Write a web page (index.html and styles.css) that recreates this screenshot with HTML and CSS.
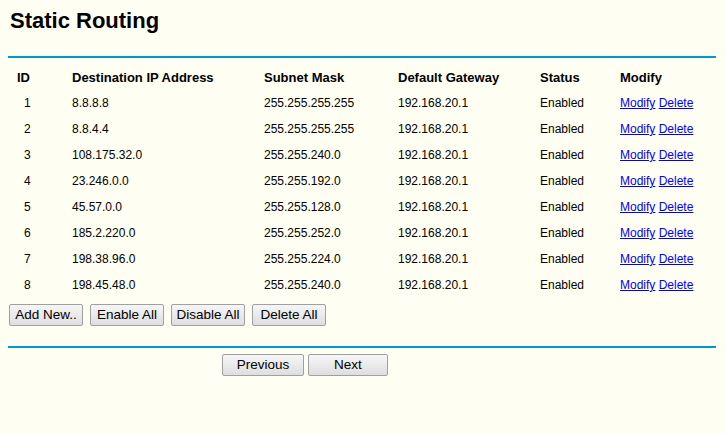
FILE: index.html
```html
<!DOCTYPE html>
<html>
<head>
<meta charset="utf-8">
<link rel="stylesheet" href="styles.css">
</head>
<body>
<div class="page">
  <h1 class="title">Static Routing</h1>
  <div class="rule"></div>
  <table class="routes">
    <colgroup>
      <col class="c-id"><col class="c-dst"><col class="c-mask"><col class="c-gw"><col class="c-st"><col class="c-mod">
    </colgroup>
    <thead>
      <tr>
        <th class="id-h">ID</th>
        <th>Destination IP Address</th>
        <th>Subnet Mask</th>
        <th>Default Gateway</th>
        <th>Status</th>
        <th>Modify</th>
      </tr>
    </thead>
    <tbody>
      <tr><td class="id">1</td><td>8.8.8.8</td><td>255.255.255.255</td><td>192.168.20.1</td><td>Enabled</td><td><a href="#">Modify</a> <a href="#">Delete</a></td></tr>
      <tr><td class="id">2</td><td>8.8.4.4</td><td>255.255.255.255</td><td>192.168.20.1</td><td>Enabled</td><td><a href="#">Modify</a> <a href="#">Delete</a></td></tr>
      <tr><td class="id">3</td><td>108.175.32.0</td><td>255.255.240.0</td><td>192.168.20.1</td><td>Enabled</td><td><a href="#">Modify</a> <a href="#">Delete</a></td></tr>
      <tr><td class="id">4</td><td>23.246.0.0</td><td>255.255.192.0</td><td>192.168.20.1</td><td>Enabled</td><td><a href="#">Modify</a> <a href="#">Delete</a></td></tr>
      <tr><td class="id">5</td><td>45.57.0.0</td><td>255.255.128.0</td><td>192.168.20.1</td><td>Enabled</td><td><a href="#">Modify</a> <a href="#">Delete</a></td></tr>
      <tr><td class="id">6</td><td>185.2.220.0</td><td>255.255.252.0</td><td>192.168.20.1</td><td>Enabled</td><td><a href="#">Modify</a> <a href="#">Delete</a></td></tr>
      <tr><td class="id">7</td><td>198.38.96.0</td><td>255.255.224.0</td><td>192.168.20.1</td><td>Enabled</td><td><a href="#">Modify</a> <a href="#">Delete</a></td></tr>
      <tr><td class="id">8</td><td>198.45.48.0</td><td>255.255.240.0</td><td>192.168.20.1</td><td>Enabled</td><td><a href="#">Modify</a> <a href="#">Delete</a></td></tr>
    </tbody>
  </table>
  <div class="actions">
    <button class="btn">Add New..</button>
    <button class="btn">Enable All</button>
    <button class="btn">Disable All</button>
    <button class="btn">Delete All</button>
  </div>
  <div class="rule rule-bottom"></div>
  <div class="pager">
    <button class="btn btn-prev">Previous</button>
    <button class="btn btn-next">Next</button>
  </div>
</div>
</body>
</html>
```

FILE: styles.css
```css
html, body {
  margin: 0;
  padding: 0;
  background: #fefef2;
}
body {
  font-family: "Liberation Sans", Arial, sans-serif;
  font-size: 12px;
  color: #000;
}
.page {
  width: 708px;
  padding: 0 8px;
}
.title {
  margin: 0;
  padding: 8px 0 0 2px;
  font-size: 22px;
  font-weight: bold;
  line-height: 26px;
  height: 48px;
}
.rule {
  height: 2px;
  background: #0099cc;
}
.routes {
  border-collapse: collapse;
  table-layout: fixed;
  width: 708px;
  margin-top: 6px;
}
.c-id { width: 64px; }
.c-dst { width: 192px; }
.c-mask { width: 134px; }
.c-gw { width: 142px; }
.c-st { width: 80px; }
.c-mod { width: 96px; }
.routes th,
.routes td {
  height: 26px;
  padding: 0;
  text-align: left;
  vertical-align: middle;
  white-space: nowrap;
}
.routes th {
  font-weight: bold;
  font-size: 13px;
}
.routes th.id-h { padding-left: 9px; }
.routes td.id { padding-left: 16px; }
.routes a {
  color: #0000ff;
  text-decoration: underline;
}
.actions {
  display: flex;
  gap: 7px;
  padding: 6px 0 0 1px;
  height: 48px;
  box-sizing: border-box;
}
.btn {
  font-family: "Liberation Sans", Arial, sans-serif;
  font-size: 13.5px;
  color: #000;
  width: 74px;
  height: 22px;
  padding: 0;
  border: 1px solid #a0a0a0;
  border-radius: 2px;
  background: linear-gradient(#f6f6f6, #dedede);
  line-height: 20px;
}
.pager {
  display: flex;
  gap: 4px;
  padding: 6px 0 0 214px;
}
.btn-prev { width: 82px; }
.btn-next { width: 80px; }
```
